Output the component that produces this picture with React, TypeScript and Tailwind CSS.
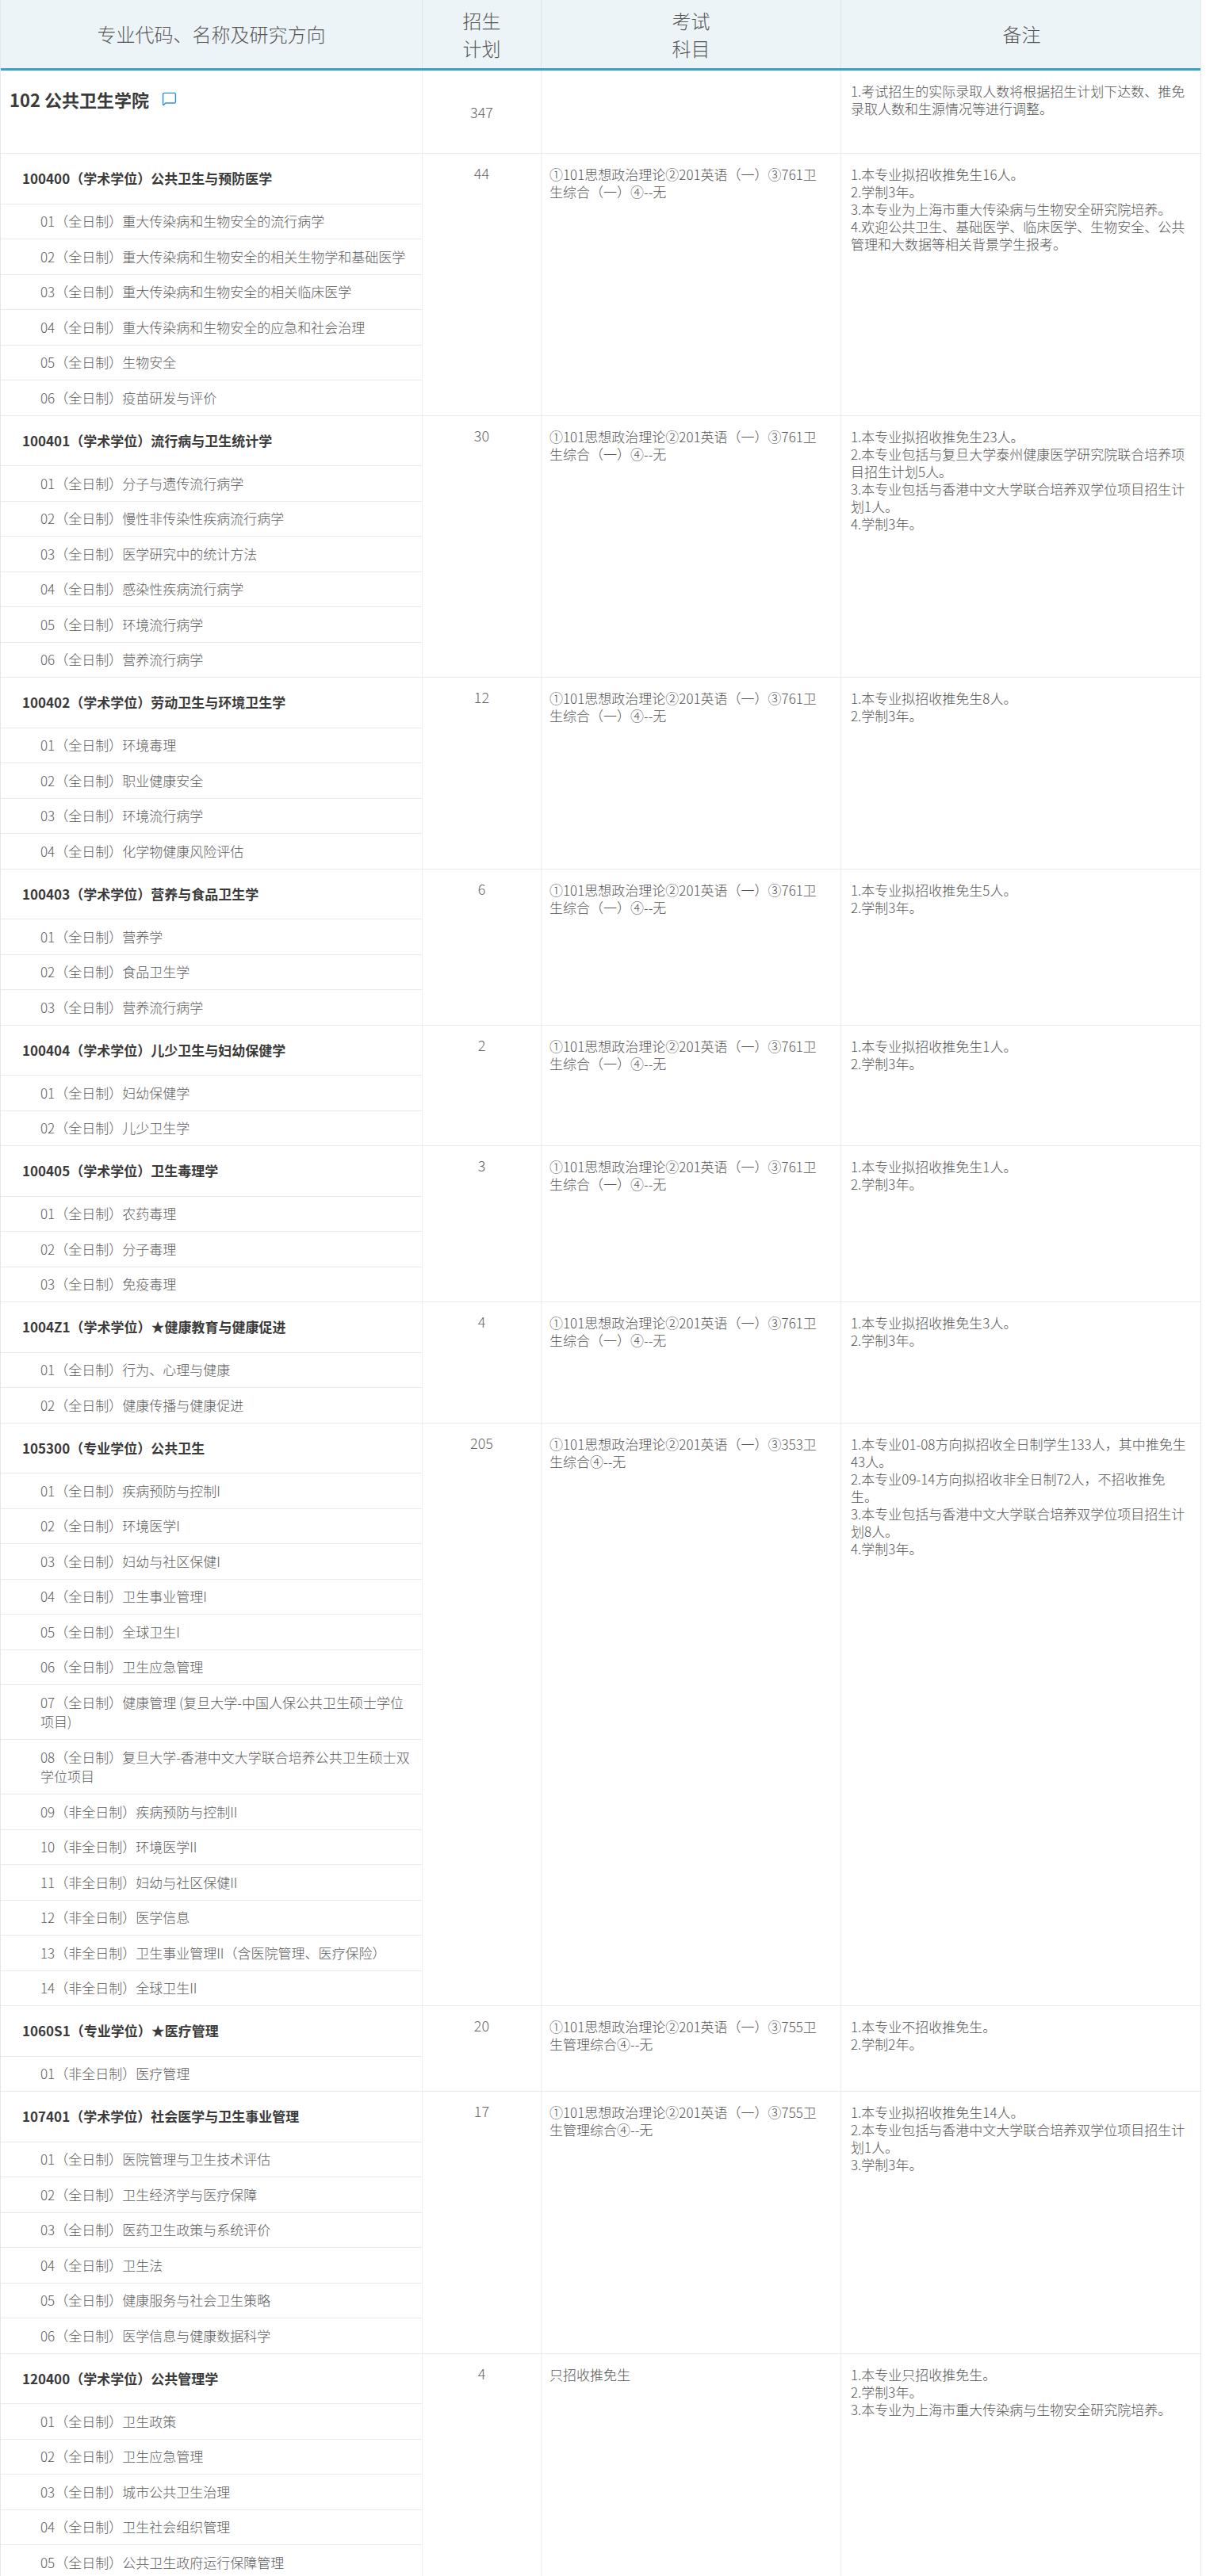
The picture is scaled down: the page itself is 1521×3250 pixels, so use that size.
import { MessageSquare } from "lucide-react";

type Section = {
  title: string;
  plan: string;
  exam: string[];
  notes: string[];
  dirs: string[];
};

const EXAM_761 = ["①101思想政治理论②201英语（一）③761卫", "生综合（一）④--无"];
const EXAM_353 = ["①101思想政治理论②201英语（一）③353卫", "生综合④--无"];
const EXAM_755 = ["①101思想政治理论②201英语（一）③755卫", "生管理综合④--无"];

const sections: Section[] = [
  {
    title: "100400（学术学位）公共卫生与预防医学",
    plan: "44",
    exam: EXAM_761,
    notes: [
      "1.本专业拟招收推免生16人。",
      "2.学制3年。",
      "3.本专业为上海市重大传染病与生物安全研究院培养。",
      "4.欢迎公共卫生、基础医学、临床医学、生物安全、公共",
      "管理和大数据等相关背景学生报考。",
    ],
    dirs: [
      "01（全日制）重大传染病和生物安全的流行病学",
      "02（全日制）重大传染病和生物安全的相关生物学和基础医学",
      "03（全日制）重大传染病和生物安全的相关临床医学",
      "04（全日制）重大传染病和生物安全的应急和社会治理",
      "05（全日制）生物安全",
      "06（全日制）疫苗研发与评价",
    ],
  },
  {
    title: "100401（学术学位）流行病与卫生统计学",
    plan: "30",
    exam: EXAM_761,
    notes: [
      "1.本专业拟招收推免生23人。",
      "2.本专业包括与复旦大学泰州健康医学研究院联合培养项",
      "目招生计划5人。",
      "3.本专业包括与香港中文大学联合培养双学位项目招生计",
      "划1人。",
      "4.学制3年。",
    ],
    dirs: [
      "01（全日制）分子与遗传流行病学",
      "02（全日制）慢性非传染性疾病流行病学",
      "03（全日制）医学研究中的统计方法",
      "04（全日制）感染性疾病流行病学",
      "05（全日制）环境流行病学",
      "06（全日制）营养流行病学",
    ],
  },
  {
    title: "100402（学术学位）劳动卫生与环境卫生学",
    plan: "12",
    exam: EXAM_761,
    notes: ["1.本专业拟招收推免生8人。", "2.学制3年。"],
    dirs: [
      "01（全日制）环境毒理",
      "02（全日制）职业健康安全",
      "03（全日制）环境流行病学",
      "04（全日制）化学物健康风险评估",
    ],
  },
  {
    title: "100403（学术学位）营养与食品卫生学",
    plan: "6",
    exam: EXAM_761,
    notes: ["1.本专业拟招收推免生5人。", "2.学制3年。"],
    dirs: ["01（全日制）营养学", "02（全日制）食品卫生学", "03（全日制）营养流行病学"],
  },
  {
    title: "100404（学术学位）儿少卫生与妇幼保健学",
    plan: "2",
    exam: EXAM_761,
    notes: ["1.本专业拟招收推免生1人。", "2.学制3年。"],
    dirs: ["01（全日制）妇幼保健学", "02（全日制）儿少卫生学"],
  },
  {
    title: "100405（学术学位）卫生毒理学",
    plan: "3",
    exam: EXAM_761,
    notes: ["1.本专业拟招收推免生1人。", "2.学制3年。"],
    dirs: ["01（全日制）农药毒理", "02（全日制）分子毒理", "03（全日制）免疫毒理"],
  },
  {
    title: "1004Z1（学术学位）★健康教育与健康促进",
    plan: "4",
    exam: EXAM_761,
    notes: ["1.本专业拟招收推免生3人。", "2.学制3年。"],
    dirs: ["01（全日制）行为、心理与健康", "02（全日制）健康传播与健康促进"],
  },
  {
    title: "105300（专业学位）公共卫生",
    plan: "205",
    exam: EXAM_353,
    notes: [
      "1.本专业01-08方向拟招收全日制学生133人，其中推免生",
      "43人。",
      "2.本专业09-14方向拟招收非全日制72人，不招收推免",
      "生。",
      "3.本专业包括与香港中文大学联合培养双学位项目招生计",
      "划8人。",
      "4.学制3年。",
    ],
    dirs: [
      "01（全日制）疾病预防与控制I",
      "02（全日制）环境医学I",
      "03（全日制）妇幼与社区保健I",
      "04（全日制）卫生事业管理I",
      "05（全日制）全球卫生I",
      "06（全日制）卫生应急管理",
      "07（全日制）健康管理 (复旦大学-中国人保公共卫生硕士学位\n项目)",
      "08（全日制）复旦大学-香港中文大学联合培养公共卫生硕士双\n学位项目",
      "09（非全日制）疾病预防与控制II",
      "10（非全日制）环境医学II",
      "11（非全日制）妇幼与社区保健II",
      "12（非全日制）医学信息",
      "13（非全日制）卫生事业管理II（含医院管理、医疗保险）",
      "14（非全日制）全球卫生II",
    ],
  },
  {
    title: "1060S1（专业学位）★医疗管理",
    plan: "20",
    exam: EXAM_755,
    notes: ["1.本专业不招收推免生。", "2.学制2年。"],
    dirs: ["01（非全日制）医疗管理"],
  },
  {
    title: "107401（学术学位）社会医学与卫生事业管理",
    plan: "17",
    exam: EXAM_755,
    notes: [
      "1.本专业拟招收推免生14人。",
      "2.本专业包括与香港中文大学联合培养双学位项目招生计",
      "划1人。",
      "3.学制3年。",
    ],
    dirs: [
      "01（全日制）医院管理与卫生技术评估",
      "02（全日制）卫生经济学与医疗保障",
      "03（全日制）医药卫生政策与系统评价",
      "04（全日制）卫生法",
      "05（全日制）健康服务与社会卫生策略",
      "06（全日制）医学信息与健康数据科学",
    ],
  },
  {
    title: "120400（学术学位）公共管理学",
    plan: "4",
    exam: ["只招收推免生"],
    notes: [
      "1.本专业只招收推免生。",
      "2.学制3年。",
      "3.本专业为上海市重大传染病与生物安全研究院培养。",
    ],
    dirs: [
      "01（全日制）卫生政策",
      "02（全日制）卫生应急管理",
      "03（全日制）城市公共卫生治理",
      "04（全日制）卫生社会组织管理",
      "05（全日制）公共卫生政府运行保障管理",
    ],
  },
];

function Lines({ lines }: { lines: string[] }) {
  return (
    <>
      {lines.map((line) => (
        <div key={line} className="whitespace-nowrap">
          {line}
        </div>
      ))}
    </>
  );
}

function SectionRows({ section }: { section: Section }) {
  return (
    <div className="grid grid-cols-[532px_150px_378px_455px] border-b border-[#e8ecef]">
      <div className="flex flex-col border-r border-[#edf0f2]">
        <div className="border-b border-[#e8ecef] py-[19px] pl-[27px] text-[17px] leading-[24.5px] font-bold text-[#3a3a3a] whitespace-nowrap">
          {section.title}
        </div>
        {section.dirs.map((dir, i) => (
          <div
            key={dir}
            className={`py-[9.5px] pl-[50px] text-[17px] leading-[24.5px] font-light text-[#5c5c5c] whitespace-pre ${
              i < section.dirs.length - 1 ? "border-b border-[#e8ecef]" : ""
            }`}
          >
            {dir}
          </div>
        ))}
      </div>
      <div className="border-r border-[#edf0f2] pt-[13px] text-center text-[18px] leading-[22px] font-light text-[#666]">
        {section.plan}
      </div>
      <div className="border-r border-[#edf0f2] px-[10px] pt-[15px] text-[17px] leading-[22px] font-light text-[#555]">
        <Lines lines={section.exam} />
      </div>
      <div className="pl-[12px] pt-[15px] text-[17px] leading-[22px] font-light text-[#555]">
        <Lines lines={section.notes} />
      </div>
    </div>
  );
}

export default function App() {
  return (
    <div className="min-h-screen bg-white font-['Noto_Sans_CJK_SC','Noto_Sans',sans-serif]">
      <div className="w-[1515px] border-x border-[#e3e8ec]">
        <div className="grid h-[89px] grid-cols-[532px_150px_378px_455px] border-b-[3px] border-[#3c9fc8] bg-[#edf4f8] text-[24px] font-light text-[#555]">
          <div className="flex items-center justify-center border-r border-[#dde6ec]">
            专业代码、名称及研究方向
          </div>
          <div className="flex flex-col items-center justify-center border-r border-[#dde6ec] leading-[35px]">
            <span>招生</span>
            <span>计划</span>
          </div>
          <div className="flex flex-col items-center justify-center border-r border-[#dde6ec] leading-[35px]">
            <span>考试</span>
            <span>科目</span>
          </div>
          <div className="flex items-center justify-center">备注</div>
        </div>

        <div className="grid h-[105px] grid-cols-[532px_150px_378px_455px] border-b border-[#e8ecef]">
          <div className="flex items-start gap-[16px] border-r border-[#edf0f2] pl-[11px] pt-[22px]">
            <span className="text-[22px] leading-[28px] font-bold text-[#3a3a3a]">102 公共卫生学院</span>
            <MessageSquare className="mt-[4px] h-[19px] w-[19px] text-[#2d8ee8]" strokeWidth={1.8} />
          </div>
          <div className="flex items-center justify-center border-r border-[#edf0f2] text-[18px] font-light text-[#666]">
            347
          </div>
          <div className="border-r border-[#edf0f2]" />
          <div className="pl-[12px] pt-[15px] text-[17px] leading-[22px] font-light text-[#555]">
            <Lines
              lines={[
                "1.考试招生的实际录取人数将根据招生计划下达数、推免",
                "录取人数和生源情况等进行调整。",
              ]}
            />
          </div>
        </div>

        {sections.map((section) => (
          <SectionRows key={section.title} section={section} />
        ))}
      </div>
    </div>
  );
}
